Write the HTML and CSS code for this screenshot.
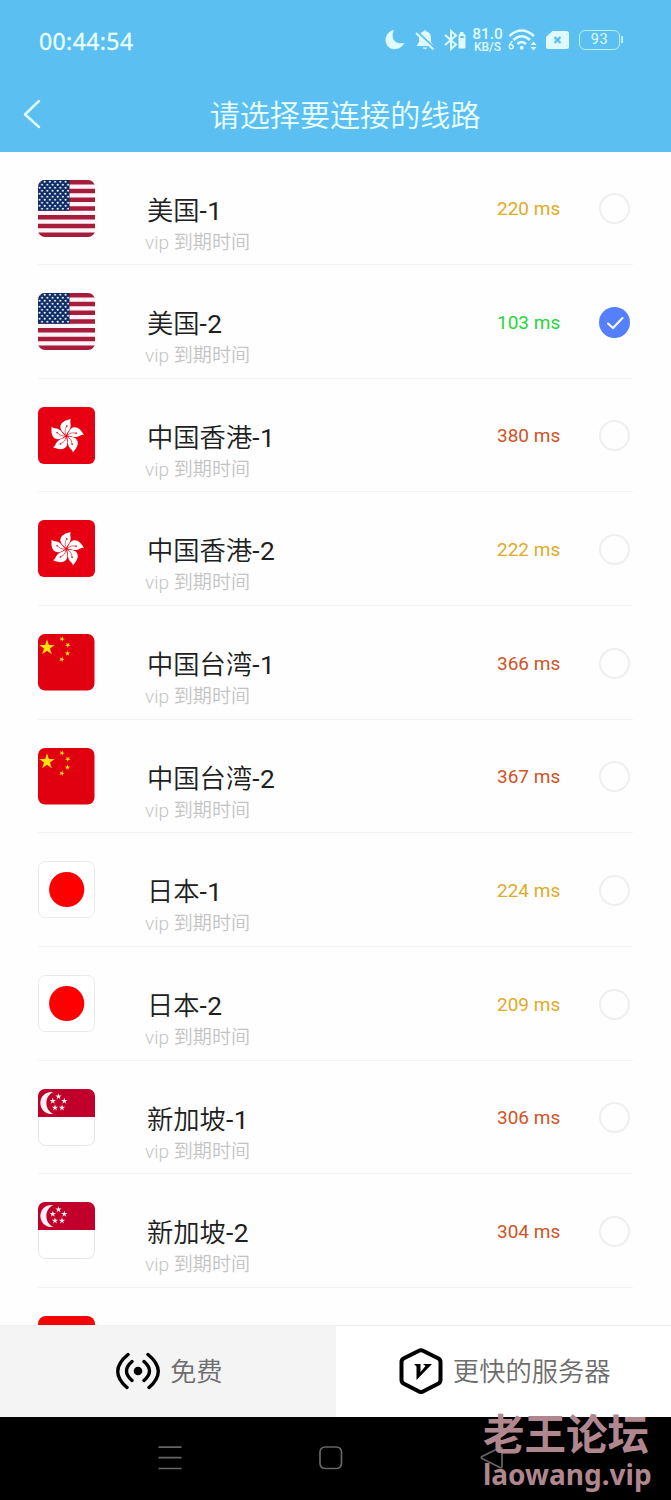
FILE: index.html
```html
<!DOCTYPE html>
<html lang="zh-CN">
<head>
<meta charset="utf-8">
<title>请选择要连接的线路</title>
<link rel="stylesheet" href="styles.css">
</head>
<body>
<svg class="defs" aria-hidden="true">
  <defs>
    <clipPath id="round"><rect width="57" height="57" rx="7"/></clipPath>
    <pattern id="stars" width="5.200" height="6" patternUnits="userSpaceOnUse">
      <circle cx="1.500" cy="1.700" r="1" fill="#fff"/><circle cx="4.100" cy="4.700" r="1" fill="#fff"/>
    </pattern>
    <polygon id="star" points="0,-1 .225,-.309 .951,-.309 .363,.118 .588,.809 0,.382 -.588,.809 -.363,.118 -.951,-.309 -.225,-.309"/>
    <g id="petal">
      <path fill="#fff" d="M0-1C-3-3-6.800-6-6-10C-5-14-1-16 4.500-17C2.800-14.800 4.800-12 4-9C3.200-5.500.800-4.500 0-1Z"/>
      <path fill="none" stroke="#e60012" stroke-width=".6" d="M0-1C-2-4-1.500-7 .2-9.500"/>
      <circle cx=".3" cy="-10" r=".9" fill="#c33"/>
    </g>
    <symbol id="us" viewBox="0 0 57 57">
      <g clip-path="url(#round)">
        <rect width="57" height="57" fill="#fff3f7"/>
        <path stroke="#a51d3b" stroke-width="4.400" d="M0 2.200H57M0 11H57M0 19.700H57M0 28.500H57M0 37.300H57M0 46H57M0 54.800H57"/>
        <rect width="31.500" height="30.700" fill="#0d2d66"/>
        <rect width="31" height="30" fill="url(#stars)"/>
      </g>
    </symbol>
    <symbol id="hk" viewBox="0 0 57 57">
      <rect width="57" height="57" rx="6" fill="#e60012"/>
      <g transform="translate(28.500 29)">
        <use href="#petal"/><use href="#petal" transform="rotate(72)"/><use href="#petal" transform="rotate(144)"/><use href="#petal" transform="rotate(216)"/><use href="#petal" transform="rotate(288)"/>
      </g>
    </symbol>
    <symbol id="cn" viewBox="0 0 57 57">
      <rect width="56.500" height="56.500" rx="7" fill="#e0000f"/>
      <g fill="#ffe011">
        <use href="#star" transform="translate(9 13.500) scale(8.200)"/>
        <use href="#star" transform="translate(24 5) rotate(20) scale(2.900)"/>
        <use href="#star" transform="translate(29.800 11) rotate(40) scale(2.900)"/>
        <use href="#star" transform="translate(29.500 19.500) scale(2.900)"/>
        <use href="#star" transform="translate(23.700 25.300) rotate(20) scale(2.900)"/>
      </g>
    </symbol>
    <symbol id="jp" viewBox="0 0 57 57">
      <rect x=".5" y=".5" width="56" height="56" rx="7" fill="#fff" stroke="#ebe8ee"/>
      <circle cx="28.700" cy="28.500" r="17.600" fill="#fe0000"/>
    </symbol>
    <symbol id="sg" viewBox="0 0 57 57">
      <rect x=".5" y=".5" width="56" height="56" rx="7" fill="#fff" stroke="#e9e4ec"/>
      <path clip-path="url(#round)" fill="#c0002b" d="M0 0H57V28H0Z"/>
      <path fill="#fff0f5" d="M15.500 3C-1.500 1-2.500 26 15.500 25C6 21 6 7 15.500 3Z"/>
      <g fill="#fff0f5">
        <use href="#star" transform="translate(20.500 7.500) scale(3.300)"/>
        <use href="#star" transform="translate(14.800 12) scale(3.300)"/>
        <use href="#star" transform="translate(26.300 12) scale(3.300)"/>
        <use href="#star" transform="translate(17 18.800) scale(3.300)"/>
        <use href="#star" transform="translate(24 18.800) scale(3.300)"/>
      </g>
    </symbol>
    <symbol id="red" viewBox="0 0 57 57"><rect width="57" height="57" rx="8" fill="#f20505"/></symbol>
  </defs>
</svg>

<div class="screen">
  <header class="header">
    <div class="status">
      <time class="clock">00:44:54</time>
      <div class="indicators">
        <svg class="moon" width="20" height="22" viewBox="0 0 20 22"><path d="M9 1C5 9 10 16 19.500 14C16.500 20 8 22.500 3 17.500C-2 12 1 2.500 9 1Z"/></svg>
        <svg class="bell" width="20" height="22" viewBox="0 0 20 22"><path d="M8.500 2.500Q10-.5 11.500 2.500C15 3.500 16 6 16 9V13L18.500 17H1.500L4 13V9C4 6 5 3.500 8.500 2.500ZM7.500 18.500H12.500Q10 22 7.500 18.500Z"/><path class="bell-gap" d="M2 2.500L19 18.500"/><path class="slash" d="M1 4L18.500 20.500"/></svg>
        <svg class="bluetooth" width="22" height="22" viewBox="0 0 22 22"><path class="line" d="M1 6L12 15.500L7 20V2L12 6.500L1 16"/><path d="M16 3H19.500V5H20Q21.500 5 21.500 6.500V18Q21.500 19.500 20 19.500H15.500Q14.500 19.500 14.500 18V6.500Q14.500 5 16 5Z"/><path class="battery-gap" d="M16.300 7H19.700V9H16.300Z"/></svg>
        <div class="speed"><span class="rate">81.0</span><span class="unit">KB/S</span></div>
        <svg class="wifi" width="29" height="22" viewBox="0 0 29 22"><path class="arc" d="M1.500 7Q13.500-4 26 7M5.500 11Q13.500 3.500 22 11M9.500 15Q13.500 11 18 15"/><circle cx="13.700" cy="18.800" r="2"/><path class="six" d="M4.500 12Q1 15.500 1.300 18A2 2 0 1 0 2.500 16"/><path d="M22.500 16L25.500 12.500L28.500 16ZM22.500 18L25.500 21.500L28.500 18Z"/></svg>
        <svg class="sim" width="23" height="18" viewBox="0 0 23 18"><path d="M6.500 0H20.500Q23 0 23 2.500V15.500Q23 18 20.500 18H2.500Q0 18 0 15.500V6Z"/><path class="cross" d="M8.500 6L14.500 12M14.500 6L8.500 12"/></svg>
        <div class="battery">93</div>
      </div>
    </div>
    <div class="titlebar">
      <svg class="back" width="18" height="30" viewBox="0 0 18 30"><path d="M16 2L2 15.500L16 28"/></svg>
      <h1 class="title">请选择要连接的线路</h1>
    </div>
  </header>

  <main class="list">
    <div class="row"><svg class="flag"><use href="#us"/></svg><div class="info"><div class="name">美国<span class="num">-1</span></div><div class="note">vip 到期时间</div></div><div class="ping medium">220 ms</div><span class="radio"></span></div>
    <div class="row"><svg class="flag"><use href="#us"/></svg><div class="info"><div class="name">美国<span class="num">-2</span></div><div class="note">vip 到期时间</div></div><div class="ping fast">103 ms</div><span class="radio checked"><svg width="31" height="31" viewBox="0 0 31 31"><path d="M9 16.500L14 21L23.500 11"/></svg></span></div>
    <div class="row"><svg class="flag"><use href="#hk"/></svg><div class="info"><div class="name">中国香港<span class="num">-1</span></div><div class="note">vip 到期时间</div></div><div class="ping slow">380 ms</div><span class="radio"></span></div>
    <div class="row"><svg class="flag"><use href="#hk"/></svg><div class="info"><div class="name">中国香港<span class="num">-2</span></div><div class="note">vip 到期时间</div></div><div class="ping medium">222 ms</div><span class="radio"></span></div>
    <div class="row"><svg class="flag"><use href="#cn"/></svg><div class="info"><div class="name">中国台湾<span class="num">-1</span></div><div class="note">vip 到期时间</div></div><div class="ping slow">366 ms</div><span class="radio"></span></div>
    <div class="row"><svg class="flag"><use href="#cn"/></svg><div class="info"><div class="name">中国台湾<span class="num">-2</span></div><div class="note">vip 到期时间</div></div><div class="ping slow">367 ms</div><span class="radio"></span></div>
    <div class="row"><svg class="flag"><use href="#jp"/></svg><div class="info"><div class="name">日本<span class="num">-1</span></div><div class="note">vip 到期时间</div></div><div class="ping medium">224 ms</div><span class="radio"></span></div>
    <div class="row"><svg class="flag"><use href="#jp"/></svg><div class="info"><div class="name">日本<span class="num">-2</span></div><div class="note">vip 到期时间</div></div><div class="ping medium">209 ms</div><span class="radio"></span></div>
    <div class="row"><svg class="flag"><use href="#sg"/></svg><div class="info"><div class="name">新加坡<span class="num">-1</span></div><div class="note">vip 到期时间</div></div><div class="ping slow">306 ms</div><span class="radio"></span></div>
    <div class="row"><svg class="flag"><use href="#sg"/></svg><div class="info"><div class="name">新加坡<span class="num">-2</span></div><div class="note">vip 到期时间</div></div><div class="ping slow">304 ms</div><span class="radio"></span></div>
    <div class="row"><svg class="flag"><use href="#red"/></svg></div>
  </main>

  <nav class="tabs">
    <div class="tab active">
      <svg width="44" height="38" viewBox="0 0 44 38"><circle cx="22" cy="19" r="4.300"/><path class="wave" d="M12 2.500Q-8 19 11 35.500M16 9.500Q5 19 16 28.500M32 2.500Q52 19 33 35.500M28 9.500Q39 19 28 28.500"/></svg>
      <span>免费</span>
    </div>
    <div class="tab">
      <svg width="44" height="46" viewBox="0 0 44 46"><path class="hex" d="M20 2.700Q22 1.600 24 2.700L39.500 10.500Q41.500 11.700 41.500 14V32Q41.500 34.300 39.500 35.500L24 43.500Q22 44.600 20 43.500L4.500 35.500Q2.500 34.300 2.500 32V14Q2.500 11.700 4.500 10.500Z"/><path d="M15 16H21.500V24L26.500 18L24 16H33L17.500 32V18.500Z"/></svg>
      <span>更快的服务器</span>
    </div>
  </nav>

  <footer class="navkeys">
    <svg width="24" height="24" viewBox="0 0 24 24"><path d="M.5 1.200H23.500M.5 11.700H23.500M.5 22.500H23.500"/></svg>
    <svg width="24" height="24" viewBox="0 0 24 24"><rect x="1" y="1" width="21.500" height="21.500" rx="5"/></svg>
    <svg width="24" height="24" viewBox="0 0 24 24"><path d="M2 10.500L20 1.500Q22 1 22 3V20Q22 22.500 20 21.500L2 12.500Q.5 11.500 2 10.500Z"/></svg>
    <div class="watermark"><span class="mark-cn">老王论坛</span><span class="mark-url">laowang.vip</span></div>
  </footer>
</div>
</body>
</html>
```
FILE: styles.css
```css
* { box-sizing: border-box; }
body { margin: 0; background: #fff; font-family: Roboto, "Noto Sans CJK SC", sans-serif; }
svg { display: block; flex: none; }
.defs { position: absolute; width: 0; height: 0; }
.screen { width: 671px; height: 1500px; display: flex; flex-direction: column; overflow: hidden; background: #fefefe; }

.header { flex: none; height: 151.5px; background: #5bbff1; color: #e9ffff; }
.status { height: 80px; padding: 0 51px 0 39px; display: flex; align-items: center; justify-content: space-between; }
.clock { font: 400 23px/30px "Noto Sans", sans-serif; letter-spacing: .4px; padding-top: 1px; -webkit-text-stroke: .3px; }
.indicators { display: flex; align-items: center; fill: #dffaff; color: #dffaff; }
.moon { margin-right: 10px; }
.bell { margin-right: 9px; }
.bluetooth { margin-right: 6px; }
.bell-gap { stroke: #5bbff1; stroke-width: 2; }
.slash, .line, .arc, .six { fill: none; stroke: #dffaff; stroke-width: 2; }
.arc { stroke-width: 2.6; }
.six { stroke-width: 1.5; }
.battery-gap { fill: #5bbff1; }
.speed { width: 31px; display: flex; flex-direction: column; align-items: center; margin-right: 5px; font-family: Roboto, sans-serif; font-weight: 500; white-space: nowrap; }
.rate { font-size: 15.500px; line-height: 13px; }
.unit { font-size: 12px; line-height: 12px; }
.wifi { margin-right: 9px; }
.sim { margin-right: 10px; }
.cross { fill: none; stroke: #5bbff1; stroke-width: 2.4; }
.battery { position: relative; width: 41px; height: 20px; border: 1.500px solid #b9f0fd; border-radius: 6px; text-align: center; font: 14.500px/18px Roboto, sans-serif; letter-spacing: .6px; }
.battery::after { content: ""; position: absolute; right: -4px; top: 5px; width: 2px; height: 7px; background: #b9f0fd; }
.titlebar { display: flex; align-items: center; height: 67px; padding: 0 190.500px 0 23px; justify-content: space-between; }
.back { fill: none; stroke: #e2fcff; stroke-width: 2.5; stroke-linecap: round; stroke-linejoin: round; }
.title { margin: 0; font-size: 30.100px; line-height: 40px; font-weight: 350; padding-top: 5px; }

.list { height: 1173.500px; flex: none; overflow: hidden; padding: 0 38px; }
.row { height: 113.670px; border-bottom: 1px solid #f3f3f5; display: flex; align-items: flex-start; }
.flag { width: 57px; height: 57px; margin-top: 28px; }
.info { width: 352px; margin-left: 50px; padding-top: 41px; white-space: nowrap; }
.name { margin-left: 2px; font-size: 26.300px; line-height: 36px; font-weight: 350; color: #202020; }
.num { font-weight: 400; letter-spacing: .5px; }
.note { font-size: 19.100px; line-height: 28px; font-weight: 350; color: #c4c4c4; }
.ping { width: 101.500px; padding-top: 43.500px; font-size: 19px; line-height: 28px; white-space: nowrap; }
.medium { color: #e0ab27; }
.fast { color: #28d53b; }
.slow { color: #cf5427; }
.radio { flex: none; width: 31px; height: 31px; margin-top: 41.500px; border: 2px solid #efeff1; border-radius: 50%; }
.checked { border: 0; background: #557ffc; fill: none; stroke: #fff; stroke-width: 2; stroke-linecap: round; }

.tabs { flex: none; height: 91.500px; display: flex; border-top: 1px solid #eee; background: #fff; color: #6d6d6d; font-size: 26.300px; font-weight: 350; line-height: 36px; }
.tab { width: 50%; display: flex; align-items: center; justify-content: center; gap: 10px; padding-left: 3px; }
.tab span { padding-top: 2px; }
.tab.active { background: #f4f4f4; }
.tab + .tab { padding-left: 3px; gap: 10px; }
.wave, .hex { fill: none; stroke: #000; stroke-width: 3.400; stroke-linecap: round; }
.hex { stroke-width: 4; }

.navkeys { position: relative; flex: 1; background: #000; display: flex; align-items: center; gap: 137px; padding-left: 158px; fill: none; stroke: #666; stroke-width: 1.700; }
.watermark { position: absolute; left: 483px; top: -7px; display: flex; flex-direction: column; color: #b1878f; font-weight: 700; white-space: nowrap; }
.mark-cn { font-family: "Noto Sans CJK SC", sans-serif; font-size: 41.500px; line-height: 44px; }
.mark-url { font-family: "Noto Sans", sans-serif; font-size: 28px; line-height: 40px; }
```
